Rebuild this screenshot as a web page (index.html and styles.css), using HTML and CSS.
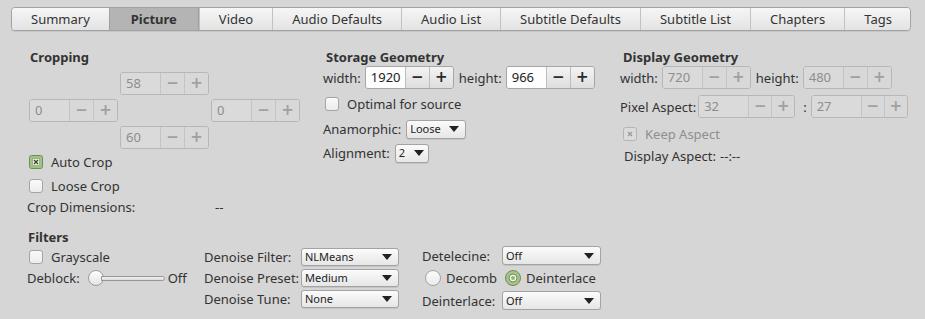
FILE: index.html
```html
<!DOCTYPE html>
<html lang="en">
<head>
  <meta charset="UTF-8" />
  <title>Picture Settings</title>
  <link rel="stylesheet" href="styles.css">
</head>
<body>

<div class="tabs">
  <div class="tab">Summary</div>
  <div class="tab active">Picture</div>
  <div class="tab">Video</div>
  <div class="tab">Audio Defaults</div>
  <div class="tab">Audio List</div>
  <div class="tab">Subtitle Defaults</div>
  <div class="tab">Subtitle List</div>
  <div class="tab">Chapters</div>
  <div class="tab">Tags</div>
</div>

<div class="geom">
  <!-- Cropping -->
  <div class="col col-crop">
    <div class="title">Cropping</div>
    <div class="crop-grid">
      <div class="spin off top"><span class="entry">58</span><span class="btn">−</span><span class="btn">+</span></div>
      <div class="spin off left"><span class="entry">0</span><span class="btn">−</span><span class="btn">+</span></div>
      <div class="spin off right"><span class="entry">0</span><span class="btn">−</span><span class="btn">+</span></div>
      <div class="spin off bottom"><span class="entry">60</span><span class="btn">−</span><span class="btn">+</span></div>
    </div>
    <div class="row check-row first">
      <span class="check on">
        <svg width="14" height="14" viewBox="0 0 14 14"><rect x="0.5" y="0.5" width="13" height="13" rx="2" fill="#a3c187" stroke="#6e8e52"/><rect x="3.5" y="3.5" width="7" height="7" fill="#eef3e8" stroke="#7f9b66" stroke-width="0.6"/><path d="M5 5 L9 9 M9 5 L5 9" stroke="#3d4636" stroke-width="1.4"/></svg>
      </span>
      <span>Auto Crop</span>
    </div>
    <div class="row check-row">
      <span class="check"></span>
      <span>Loose Crop</span>
    </div>
    <div class="row dims">
      <span class="dims-label">Crop Dimensions:</span>
      <span>--</span>
    </div>
  </div>

  <!-- Storage Geometry -->
  <div class="col col-store">
    <div class="title">Storage Geometry</div>
    <div class="row size-row">
      <span>width:</span>
      <div class="spin"><span class="entry">1920</span><span class="btn">−</span><span class="btn">+</span></div>
      <span class="sp">height:</span>
      <div class="spin"><span class="entry">966</span><span class="btn">−</span><span class="btn">+</span></div>
    </div>
    <div class="row check-row optimal">
      <span class="check"></span>
      <span>Optimal for source</span>
    </div>
    <div class="row combo-row anam">
      <span>Anamorphic:</span>
      <div class="combo w60"><span>Loose</span><i class="arrow"></i></div>
    </div>
    <div class="row combo-row align">
      <span>Alignment:</span>
      <div class="combo w34"><span>2</span><i class="arrow"></i></div>
    </div>
  </div>

  <!-- Display Geometry -->
  <div class="col col-disp">
    <div class="title">Display Geometry</div>
    <div class="row size-row">
      <span>width:</span>
      <div class="spin off"><span class="entry">720</span><span class="btn">−</span><span class="btn">+</span></div>
      <span class="sp">height:</span>
      <div class="spin off"><span class="entry">480</span><span class="btn">−</span><span class="btn">+</span></div>
    </div>
    <div class="row size-row par">
      <span>Pixel Aspect:</span>
      <div class="spin off wide"><span class="entry">32</span><span class="btn">−</span><span class="btn">+</span></div>
      <span class="colon">:</span>
      <div class="spin off wide"><span class="entry">27</span><span class="btn">−</span><span class="btn">+</span></div>
    </div>
    <div class="row check-row keep">
      <span class="check dis">
        <svg width="14" height="14" viewBox="0 0 14 14"><rect x="0.5" y="0.5" width="13" height="13" rx="2" fill="#dcdcdc" stroke="#b4b4b4"/><path d="M5 5 L9 9 M9 5 L5 9" stroke="#9a9a9a" stroke-width="1.4"/></svg>
      </span>
      <span class="muted">Keep Aspect</span>
    </div>
    <div class="row disp-aspect">
      <span>Display Aspect:</span>
      <span>--:--</span>
    </div>
  </div>
</div>

<div class="filters">
  <div class="fcol fcol-main">
    <div class="title">Filters</div>
    <div class="row check-row gray">
      <span class="check"></span>
      <span>Grayscale</span>
    </div>
    <div class="row deblock">
      <span>Deblock:</span>
      <div class="slider"><span class="track"></span><span class="knob"></span></div>
      <span class="off-label">Off</span>
    </div>
  </div>

  <div class="fcol fgrid denoise">
    <span>Denoise Filter:</span>
    <div class="combo"><span>NLMeans</span><i class="arrow"></i></div>
    <span>Denoise Preset:</span>
    <div class="combo"><span>Medium</span><i class="arrow"></i></div>
    <span>Denoise Tune:</span>
    <div class="combo"><span>None</span><i class="arrow"></i></div>
  </div>

  <div class="fcol fgrid deint">
    <span>Detelecine:</span>
    <div class="combo"><span>Off</span><i class="arrow"></i></div>
    <div class="radios">
      <span class="radio"></span><span class="rlabel">Decomb</span>
      <span class="radio on">
        <svg width="16" height="16" viewBox="0 0 16 16"><circle cx="8" cy="8" r="7.5" fill="#a5c38a" stroke="#6e8e52"/><circle cx="8" cy="8" r="4" fill="#f2f5ee" stroke="#6e8e52"/><circle cx="8" cy="8" r="2" fill="#93b277"/></svg>
      </span><span class="rlabel">Deinterlace</span>
    </div>
    <span>Deinterlace:</span>
    <div class="combo"><span>Off</span><i class="arrow"></i></div>
  </div>
</div>

</body>
</html>
```

FILE: styles.css
```css
body {
  margin: 0;
  background: #d6d6d6;
  color: #333;
  font-family: "Noto Sans", "Open Sans", sans-serif;
  font-size: 13px;
  line-height: 16px;
}

/* Tabs */
.tabs {
  display: flex;
  width: 900px;
  height: 24px;
  margin: 7px 0 0 11px;
  box-sizing: border-box;
  border: 1px solid #a2a2a2;
  border-radius: 4px;
  overflow: hidden;
  box-shadow: 0 1px 0 #c6c6c6;
}

.tab {
  flex: 1 1 auto;
  padding: 0 19px;
  text-align: center;
  line-height: 22px;
  white-space: nowrap;
  background: linear-gradient(#f6f6f6, #e3e3e3);
  border-left: 1px solid #c2c2c2;
}

.tab:first-child { border-left: none; }

.tab.active {
  background: #b4b4b4;
  font-weight: bold;
  border-left-color: #a0a0a0;
  border-right: 1px solid #a0a0a0;
  padding: 0 21px;
}

/* Geometry block */
.geom {
  display: flex;
  padding-left: 27px;
  margin-top: 18px;
}

.col { display: flex; flex-direction: column; }
.col-crop { width: 296px; }
.col-store { width: 297px; }

.title {
  font-weight: bold;
  padding-left: 3px;
  line-height: 17px;
}

.row {
  display: flex;
  align-items: center;
  height: 20px;
  white-space: nowrap;
}

.crop-grid {
  display: grid;
  grid-template-columns: 89px 89px 89px;
  grid-template-rows: 23px 23px 23px;
  column-gap: 2px;
  row-gap: 4px;
  margin: 6px 0 0 2px;
}

.crop-grid .top { grid-column: 2; grid-row: 1; }
.crop-grid .left { grid-column: 1; grid-row: 2; }
.crop-grid .right { grid-column: 3; grid-row: 2; }
.crop-grid .bottom { grid-column: 2; grid-row: 3; }

/* Spin buttons */
.spin {
  display: flex;
  width: 89px;
  height: 23px;
  box-sizing: border-box;
  border: 1px solid #a6a6a6;
  border-radius: 3px;
  overflow: hidden;
  flex: none;
}

.spin .entry {
  flex: 1;
  padding-left: 5px;
  line-height: 21px;
  background: #fdfdfd;
  color: #222;
}

.spin .btn {
  width: 24px;
  box-sizing: border-box;
  border-left: 1px solid #bdbdbd;
  text-align: center;
  line-height: 21px;
  font-family: "DejaVu Sans", sans-serif;
  font-weight: bold;
  font-size: 15px;
  color: #2b2b2b;
  background: linear-gradient(#f3f3f3, #dedede);
}

.spin.off { border-color: #b7b7b7; }
.spin.off .entry { background: #dadada; color: #8e8e8e; }
.spin.off .btn {
  background: #d8d8d8;
  color: #a0a0a0;
  border-left-color: #c4c4c4;
}

.spin.wide { width: 97px; }
.spin.wide .btn { width: 23px; }

/* Checkboxes */
.check {
  width: 14px;
  height: 14px;
  box-sizing: border-box;
  border: 1px solid #a4a4a4;
  border-radius: 3px;
  background: linear-gradient(#fafafa, #ececec);
  margin: 0 8px 0 2px;
  flex: none;
}

.check.on, .check.dis { border: none; background: none; }
.check svg { display: block; }

.check-row.first { margin-top: 3px; }
.check-row + .check-row { margin-top: 4px; }

.dims { margin-top: 1px; }
.dims-label { width: 188px; }

.muted { color: #8f8f8f; }

/* Storage + display */
.size-row { height: 23px; gap: 4px; }
.size-row .sp { margin-left: 1px; }
.optimal { margin-top: 5px; }
.anam { margin-top: 5px; }
.align { margin-top: 4px; }
.combo-row { gap: 5px; }

.par { margin-top: 6px; }
.par .spin.wide:first-of-type { margin-left: -2px; }
.colon { margin: 0 0 0 4px; }
.keep { margin-top: 6px; }
.keep .check { margin-left: 3px; }
.disp-aspect { margin-top: 2px; padding-left: 4px; gap: 4px; }

/* Combo boxes */
.combo {
  display: flex;
  align-items: center;
  justify-content: space-between;
  height: 19px;
  box-sizing: border-box;
  border: 1px solid #a3a3a3;
  border-radius: 3px;
  background: linear-gradient(#fbfbfb, #e6e6e6);
  padding: 0 6px 0 3px;
  font-size: 11px;
  color: #222;
  box-shadow: 0 1px 0 #c4c4c4;
}

.combo.w60 { width: 60px; }
.combo.w34 { width: 34px; padding-right: 4px; }

.arrow {
  width: 0;
  height: 0;
  border-left: 5px solid transparent;
  border-right: 5px solid transparent;
  border-top: 6px solid #222;
}

/* Filters */
.filters {
  display: flex;
  padding-left: 27px;
  margin-top: 12px;
}

.fcol-main { width: 177px; }
.fcol-main .title { padding-left: 1px; line-height: 16px; }

.gray { margin-top: 2px; }
.deblock { margin-top: 1px; }
.deblock > span:first-child { margin-right: 8px; }

.slider {
  display: flex;
  align-items: center;
  width: 77px;
  height: 16px;
}

.knob {
  order: -1;
  width: 16px;
  height: 16px;
  box-sizing: border-box;
  border: 1px solid #9c9c9c;
  border-radius: 50%;
  background: linear-gradient(#fefefe, #e4e4e4);
  flex: none;
  margin-right: -3px;
}

.track {
  flex: 1;
  height: 5px;
  box-sizing: border-box;
  border: 1px solid #979797;
  border-radius: 0 3px 3px 0;
  background: linear-gradient(#f0f0f0, #dcdcdc);
}

.off-label { margin-left: 3px; }

.fgrid {
  display: grid;
  align-items: center;
  padding-top: 17px;
}

.denoise {
  width: 218px;
  grid-template-columns: 97px 98px;
  grid-template-rows: 21px 21px 21px;
}

.denoise .combo { height: 18px; }

.deint {
  grid-template-columns: 80px 99px;
  grid-template-rows: 19px 22px 19px;
  row-gap: 2px;
}

.radios {
  grid-column: 1 / 3;
  display: flex;
  align-items: center;
}

.radio {
  width: 16px;
  height: 16px;
  box-sizing: border-box;
  border: 1px solid #a4a4a4;
  border-radius: 50%;
  background: linear-gradient(#fbfbfb, #ebebeb);
  margin-left: 3px;
  flex: none;
}

.radio.on { border: none; background: none; margin-left: 0; }
.radio svg { display: block; }
.rlabel { margin: 0 0 0 5px; width: 59px; }
```
